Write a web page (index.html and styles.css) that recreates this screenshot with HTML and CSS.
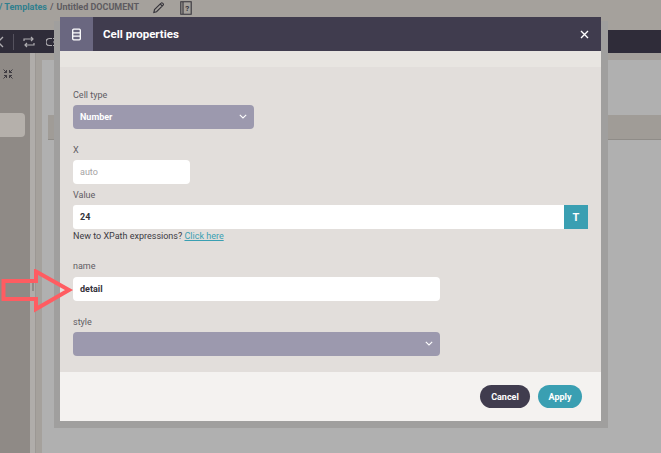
FILE: index.html
```html
<!DOCTYPE html>
<html lang="en">
<head>
<meta charset="utf-8">
<title>Cell properties</title>
<link rel="stylesheet" href="styles.css">
</head>
<body>
<div class="app">
  <header class="crumbs">
    <span class="crumb-link">/ Templates</span>
    <span class="crumb-sep">/</span>
    <span class="crumb-doc">Untitled DOCUMENT</span>
    <svg class="crumb-pencil" viewBox="0 0 14 14"><path d="M2 12.300l.7-3L9.800 2.200a1.100 1.100 0 0 1 1.600 0l.6.6a1.100 1.100 0 0 1 0 1.600L4.900 11.500zM8.800 3.200l2.200 2.200" fill="none" stroke="#35333a" stroke-width="1.200"/></svg>
    <svg class="crumb-book" viewBox="0 0 12 14"><path d="M.8.8h10.400v12.400H.8zM3 .8v12.400" fill="none" stroke="#35333a" stroke-width="1.100"/><text x="7.200" y="9.800" class="crumb-q">?</text></svg>
  </header>
  <nav class="toolbar">
    <svg class="tool-chevron" viewBox="0 0 8 14"><path d="M6 2L1 7l5 5" fill="none" stroke="#b0aeb2" stroke-width="1.300"/></svg>
    <span class="tool-sep"></span>
    <svg class="tool-icon tool-swap" viewBox="0 0 14 14"><path d="M2 6V4h9M9 2l2 2-2 2M12 8v2H3M5 8l-2 2 2 2" fill="none" stroke="#b0aeb2" stroke-width="1.200"/></svg>
    <svg class="tool-icon tool-list" viewBox="0 0 14 14"><path d="M6 3.500H3.500a3.500 3.500 0 0 0 0 7H6M7 3.500h7M7 7h7M7 10.500h7" fill="none" stroke="#b0aeb2" stroke-width="1.200"/></svg>
  </nav>
  <div class="workspace">
    <aside class="sidebar">
      <svg class="collapse" viewBox="0 0 10 10"><path d="M.5.5l3 3M3.500 1v2.500H1M9.500.5l-3 3M6.500 1v2.500H9M.5 9.500l3-3M3.500 9V6.500H1M9.500 9.500l-3-3M6.500 9V6.500H9" fill="none" stroke="#35333a" stroke-width=".9"/></svg>
      <div class="side-item"></div>
    </aside>
    <div class="rail"><span class="rail-handle"></span></div>
    <main class="canvas">
      <div class="canvas-row"></div>
      <div class="canvas-band"></div>
    </main>
  </div>
</div>

<section class="modal-shadow"></section>
<section class="modal">
  <header class="modal-head">
    <div class="modal-tab">
      <svg class="modal-db" viewBox="0 0 9 12"><path d="M1.700.7h5.600a1 1 0 0 1 1 1v8.600a1 1 0 0 1-1 1H1.700a1 1 0 0 1-1-1V1.700a1 1 0 0 1 1-1zM.7 4.300h7.600M.7 7.700h7.600" fill="none" stroke="#fff" stroke-width="1.300"/></svg>
    </div>
    <h1 class="modal-title">Cell properties</h1>
    <svg class="modal-close" viewBox="0 0 9 9"><path d="M1 1l7 7M8 1L1 8" stroke="#fff" stroke-width="1.400" fill="none"/></svg>
  </header>
  <div class="modal-strip"></div>
  <div class="modal-body">
    <div class="field f-type">
      <label class="lbl">Cell type</label>
      <div class="select w-type"><span>Number</span><svg class="chev" viewBox="0 0 8 5"><path d="M.8.8L4 4l3.200-3.200" fill="none" stroke="#fff" stroke-width="1.100"/></svg></div>
    </div>
    <div class="field f-x">
      <label class="lbl">X</label>
      <div class="input w-x placeholder">auto</div>
    </div>
    <div class="field f-value">
      <label class="lbl">Value</label>
      <div class="value-row">
        <div class="input w-value square">24</div>
        <div class="t-btn">T</div>
      </div>
      <p class="help">New to XPath expressions? <a class="help-link">Click here</a></p>
    </div>
    <div class="field f-name">
      <label class="lbl">name</label>
      <div class="input w-wide">detail</div>
    </div>
    <div class="field f-style">
      <label class="lbl">style</label>
      <div class="select w-wide"><span></span><svg class="chev" viewBox="0 0 8 5"><path d="M.8.8L4 4l3.200-3.200" fill="none" stroke="#fff" stroke-width="1.100"/></svg></div>
    </div>
  </div>
  <footer class="modal-foot">
    <button class="btn btn-cancel">Cancel</button>
    <button class="btn btn-apply">Apply</button>
  </footer>
</section>

<svg class="arrow" viewBox="0 0 74 46"><path d="M3.500 12H36V2.500L69 21 36 40V30H3.500z" fill="none" stroke="#ff5c61" stroke-width="4"/></svg>
</body>
</html>
```
FILE: styles.css
```css
* { box-sizing: border-box; }
html, body { margin: 0; height: 100%; overflow: hidden; }
body { font-family: Roboto, "Liberation Sans", sans-serif; background: #b0b0b0; }

.app { width: 661px; height: 453px; display: flex; flex-direction: column; }

.crumbs { height: 30px; background: #a5a19c; display: flex; align-items: flex-start; padding: 1px 0 0 0; font-size: 9px; overflow: hidden; line-height: 12px; }
.crumb-link { color: #2f7f8e; font-weight: 700; margin-left: -1px; }
.crumb-sep { color: #55525a; font-weight: 500; margin: 0 3px; }
.crumb-doc { color: #5e5b60; font-weight: 700; }
.crumb-pencil { width: 13px; height: 13px; margin-left: 13px; }
.crumb-book { width: 12px; height: 14px; margin-left: 15px; }
.crumb-q { font-size: 8px; font-weight: 700; text-anchor: middle; fill: #35333a; }

.toolbar { height: 23px; background: #2f2c39; display: flex; align-items: center; overflow: hidden; }
.tool-chevron { width: 8px; height: 14px; margin-left: -3px; flex: none; }
.tool-sep { width: 1px; height: 16px; background: #55525e; margin-left: 8px; flex: none; }
.tool-icon { width: 14px; height: 14px; flex: none; }
.tool-swap { margin-left: 8px; }
.tool-list { margin-left: 10px; }

.workspace { flex: 1; display: flex; min-height: 0; }
.sidebar { width: 30px; background: #8f8a86; padding: 16px 0 0 0; }
.collapse { display: block; width: 10px; height: 10px; margin-left: 3px; }
.side-item { width: 25px; height: 24px; margin-top: 34px; background: #b5b0ab; border-radius: 0 4px 4px 0; }
.rail { width: 12px; padding: 230px 0 0 2px; background: linear-gradient(90deg, #b0adaa 0 5px, #9c9894 5px 6px, #a5a19c 6px 12px); }
.rail-handle { display: block; width: 2px; height: 8px; background: #8f8c88; }
.canvas { flex: 1; background: #b0b0b0; padding-top: 15px; border-top: 7px solid #a5a19c; }
.canvas-row { height: 40px; background: #b0b0b0; margin-left: 6px; }
.canvas-band { height: 25px; margin-left: 6px; background: #a09c97; border-bottom: 1px solid #8f8c88; }

.modal-shadow { position: absolute; left: 54px; top: 21px; width: 554px; height: 407px; background: #a09f9e; }
.modal { position: absolute; left: 60px; top: 17px; width: 541px; height: 404px; display: flex; flex-direction: column; background: #e2dedb; }

.modal-head { height: 34px; background: #403c4e; display: flex; align-items: center; color: #fff; flex: none; }
.modal-tab { width: 33px; height: 34px; background: #6a6780; display: flex; align-items: center; justify-content: center; }
.modal-db { width: 9px; height: 13px; }
.modal-title { font-size: 11.500px; font-weight: 700; margin: 0 0 0 10px; flex: 1; }
.modal-close { width: 9px; height: 9px; margin-right: 12px; }

.modal-strip { height: 16px; background: #e8e5e1; flex: none; }

.modal-body { flex: 1; padding: 0 13px; display: flex; flex-direction: column; }
.lbl { display: block; font-size: 9px; line-height: 11px; color: #5f5c63; margin-bottom: 4px; }
.field { flex: none; }
.f-type { margin-top: 23px; }
.f-x { margin-top: 16px; }
.f-value { margin-top: 6px; }
.f-name { margin-top: 19px; }
.f-name .lbl { margin-bottom: 5px; }
.f-style { margin-top: 16px; }

.select { height: 24px; background: #9c99ae; border-radius: 4px; display: flex; align-items: center; justify-content: space-between; padding: 0 7px 1px; font-size: 9px; font-weight: 700; color: #fff; }
.chev { width: 8px; height: 5px; }
.input { height: 24px; background: #fff; border-radius: 4px; display: flex; align-items: center; padding: 0 7px; font-size: 9px; font-weight: 700; color: #33313a; }
.placeholder { color: #a5a3a3; font-weight: 400; }
.square { border-radius: 3px 0 0 3px; }
.w-type { width: 181px; }
.w-x { width: 117px; }
.w-value { width: 491px; }
.w-wide { width: 367px; }
.value-row { display: flex; }
.t-btn { width: 24px; height: 24px; background: #3a9fb2; color: #fff; font-size: 11px; font-weight: 700; display: flex; align-items: center; justify-content: center; }
.help { margin: 2px 0 0; font-size: 9px; line-height: 11px; color: #3c3a42; }
.help-link { color: #3a9fb2; margin-left: 0; text-decoration: underline; }

.modal-foot { height: 49px; background: #f4f2f0; display: flex; justify-content: flex-end; align-items: center; gap: 8px; padding: 0 19px 0 0; flex: none; }
.btn { height: 23px; border: 0; border-radius: 12px; color: #fff; font-family: inherit; font-size: 9px; font-weight: 700; padding: 0; }
.btn-cancel { width: 50px; background: #403c4e; }
.btn-apply { width: 44px; background: #3a9fb2; }

.arrow { position: absolute; left: 0; top: 269px; width: 74px; height: 46px; }
```
